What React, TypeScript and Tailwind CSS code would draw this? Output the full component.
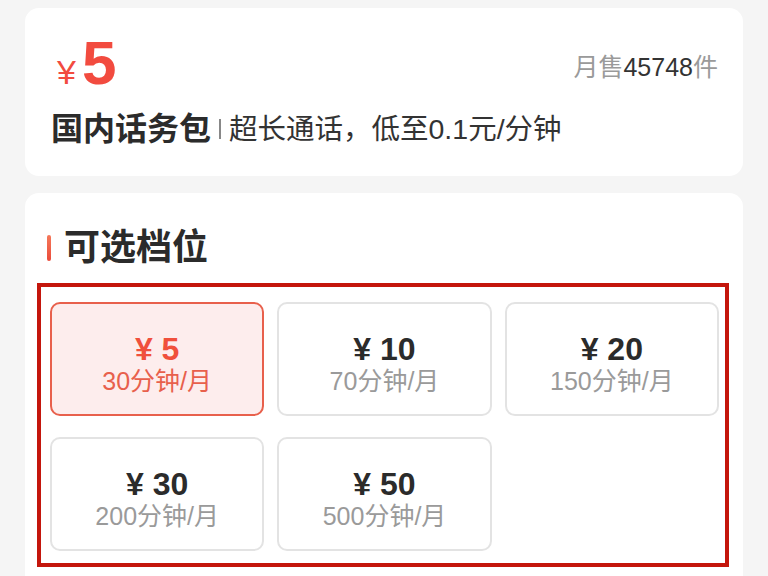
const font = { fontFamily: '"Liberation Sans", "Noto Sans CJK SC", sans-serif' };

type Tier = { price: number; minutes: number };

const tiers: Tier[] = [
  { price: 5, minutes: 30 },
  { price: 10, minutes: 70 },
  { price: 20, minutes: 150 },
  { price: 30, minutes: 200 },
  { price: 50, minutes: 500 },
];

function TierCell({ tier, active }: { tier: Tier; active: boolean }) {
  return (
    <div
      className={`h-[114px] rounded-[10px] border-2 flex flex-col items-center pt-[29px] ${
        active ? "border-[#e8604c] bg-[#fdeded]" : "border-[#e3e3e3] bg-white"
      }`}
    >
      <div
        className={`text-[32px] leading-[32px] font-bold ${
          active ? "text-[#f0503c]" : "text-[#2b2b2b]"
        }`}
      >
        ¥ {tier.price}
      </div>
      <div
        className={`text-[25px] leading-[32px] ${
          active ? "text-[#e8604c]" : "text-[#9a9a9a]"
        }`}
      >
        {tier.minutes}分钟/月
      </div>
    </div>
  );
}

export default function App() {
  return (
    <div className="w-[768px] h-[576px] overflow-hidden bg-[#f5f5f5] px-[25px] pt-[8px]" style={font}>
      {/* Product header */}
      <div className="h-[168px] bg-white rounded-[14px] pt-[26px] pl-[26px] pr-[25px]">
        <div className="flex items-start justify-between">
          <div className="flex items-baseline text-[#f24b3f]">
            <span className="text-[34px] leading-[58px] ml-[6px] mr-[6px]">¥</span>
            <span className="text-[62px] leading-[58px] font-bold">5</span>
          </div>
          <div className="mt-[18px] text-[25px] leading-[30px] text-[#9a9a9a]">
            月售<span className="text-[#333]">45748</span>件
          </div>
        </div>
        <div className="mt-[10px] flex items-center leading-[36px]">
          <span className="text-[32px] font-bold text-[#2b2b2b]">国内话务包</span>
          <span className="mx-[8px] w-[2px] h-[20px] bg-[#888]" />
          <span className="text-[28.5px] text-[#333]">超长通话，低至0.1元/分钟</span>
        </div>
      </div>

      {/* Tier options */}
      <div className="mt-[17px] h-[400px] bg-white rounded-[14px] pt-[35px] px-[12px]">
        <div className="flex items-center pl-[10px]">
          <span className="w-[4px] h-[26px] rounded-full bg-gradient-to-b from-[#f5785a] to-[#ea4a3a]" />
          <span className="ml-[13px] text-[36px] leading-[40px] font-bold text-[#2b2b2b]">可选档位</span>
        </div>
        <div className="mt-[15px] w-[692px] h-[284px] border-4 border-[#c4160c] pt-[15px] pl-[9px] pr-[6px]">
          <div className="grid grid-cols-3 gap-x-[13px] gap-y-[21px]">
            {tiers.map((t, i) => (
              <TierCell key={t.price} tier={t} active={i === 0} />
            ))}
          </div>
        </div>
      </div>
    </div>
  );
}
